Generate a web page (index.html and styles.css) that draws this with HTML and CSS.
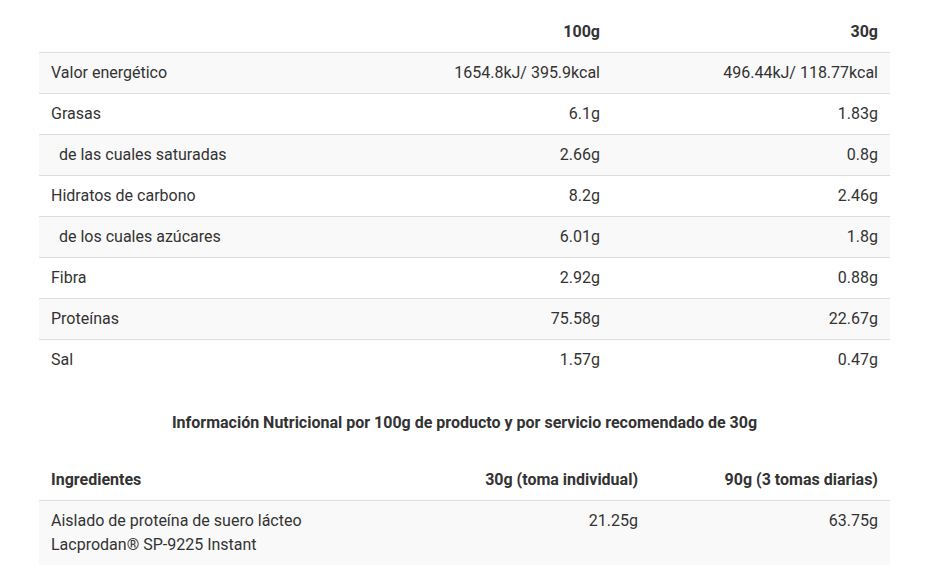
FILE: index.html
```html
<!DOCTYPE html>
<html lang="es">
<head>
<meta charset="utf-8">
<title>Información Nutricional</title>
<link rel="stylesheet" href="styles.css">
</head>
<body>
<div class="wrap">
  <table class="nt nt-main">
    <colgroup><col><col class="c-278"><col class="c-278"></colgroup>
    <thead>
      <tr><th></th><th class="r">100g</th><th class="r">30g</th></tr>
    </thead>
    <tbody>
      <tr><td>Valor energético</td><td class="r">1654.8kJ/ 395.9kcal</td><td class="r">496.44kJ/ 118.77kcal</td></tr>
      <tr><td>Grasas</td><td class="r">6.1g</td><td class="r">1.83g</td></tr>
      <tr><td class="sub">de las cuales saturadas</td><td class="r">2.66g</td><td class="r">0.8g</td></tr>
      <tr><td>Hidratos de carbono</td><td class="r">8.2g</td><td class="r">2.46g</td></tr>
      <tr><td class="sub">de los cuales azúcares</td><td class="r">6.01g</td><td class="r">1.8g</td></tr>
      <tr><td>Fibra</td><td class="r">2.92g</td><td class="r">0.88g</td></tr>
      <tr><td>Proteínas</td><td class="r">75.58g</td><td class="r">22.67g</td></tr>
      <tr><td>Sal</td><td class="r">1.57g</td><td class="r">0.47g</td></tr>
    </tbody>
  </table>

  <p class="caption">Información Nutricional por 100g de producto y por servicio recomendado de 30g</p>

  <table class="nt nt-ing">
    <colgroup><col><col class="c-240"><col class="c-240"></colgroup>
    <thead>
      <tr><th>Ingredientes</th><th class="r">30g (toma individual)</th><th class="r">90g (3 tomas diarias)</th></tr>
    </thead>
    <tbody>
      <tr><td>Aislado de proteína de suero lácteo<br>Lacprodan® SP-9225 Instant</td><td class="r top">21.25g</td><td class="r top">63.75g</td></tr>
    </tbody>
  </table>
</div>
</body>
</html>
```

FILE: styles.css
```css
html, body {
  margin: 0;
  padding: 0;
  background: #ffffff;
}

body {
  font-family: Roboto, "Liberation Sans", Arial, sans-serif;
  font-size: 16px;
  line-height: 24px;
  color: #333333;
}

.wrap {
  padding: 12px 41px 0 39px;
}

.nt {
  width: 100%;
  border-collapse: collapse;
  border-spacing: 0;
  table-layout: fixed;
}

.c-278 { width: 278px; }
.c-240 { width: 240px; }

.nt th,
.nt td {
  padding: 8px 12px;
  text-align: left;
  vertical-align: top;
}

.nt th {
  font-weight: 700;
  color: #333333;
  border-bottom: 1px solid #dddddd;
}

.nt td {
  font-weight: 400;
  color: #333333;
}

.nt tbody tr + tr td {
  border-top: 1px solid #dddddd;
}

.nt tbody tr:nth-child(odd) td {
  background: #f9f9f9;
}

.nt .r {
  text-align: right;
}

.nt td.sub {
  padding-left: 20px;
}

.caption {
  margin: 31px 0 25px;
  text-align: center;
  font-weight: 700;
  color: #333333;
}
```
